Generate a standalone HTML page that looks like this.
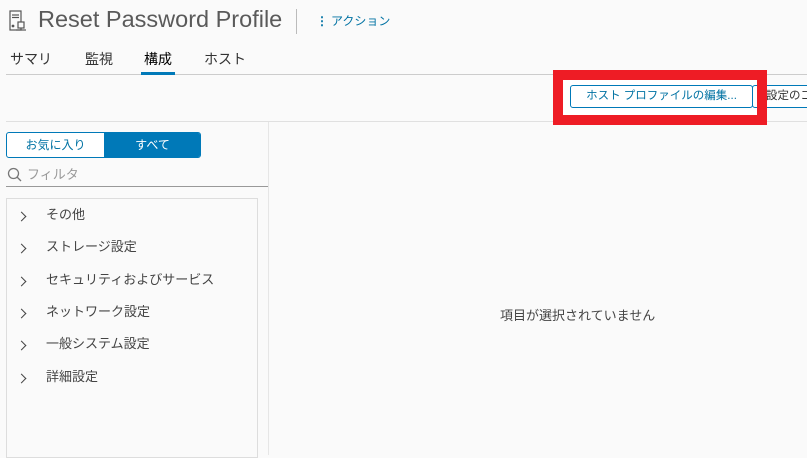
<!DOCTYPE html>
<html><head><meta charset="utf-8"><style>
*{margin:0;padding:0;box-sizing:border-box}
body{width:807px;height:455px;overflow:hidden;background:#fafafa;font-family:"Liberation Sans","Noto Sans CJK JP",sans-serif;color:#333;position:relative}
.a{position:absolute;white-space:nowrap}
.title{left:38px;top:4px;font-size:23.5px;color:#5a5a5a;line-height:30px}
.tab{top:49px;font-size:14px;color:#333;line-height:20px}
.item{left:46px;font-size:13px;color:#444;line-height:18px}
.chev{left:18px;width:7px;height:7px;border-right:1.6px solid #444;border-top:1.6px solid #444;transform:rotate(45deg)}
</style></head><body>
<svg class="a" style="left:9px;top:10px" width="18" height="22" viewBox="0 0 18 22" fill="none" stroke="#555" stroke-width="1.2">
<rect x="1" y="1" width="11" height="19"/><line x1="3" y1="5" x2="10" y2="5"/><line x1="3" y1="7.5" x2="10" y2="7.5"/>
<circle cx="4" cy="16" r="0.8" fill="#555"/><rect x="9" y="12" width="6" height="6" fill="#fafafa"/><line x1="7" y1="20" x2="17" y2="20"/>
</svg>
<div class="a title">Reset Password Profile</div>
<div class="a" style="left:296px;top:9px;width:1px;height:25px;background:#bbb"></div>
<div class="a" style="left:316px;top:12px;font-size:12px;color:#0072a3;line-height:18px"><span style="font-weight:bold;margin-right:3px">⋮</span>アクション</div>
<div class="a tab" style="left:10px">サマリ</div>
<div class="a tab" style="left:85px">監視</div>
<div class="a tab" style="left:144px;color:#000">構成</div>
<div class="a tab" style="left:204px">ホスト</div>
<div class="a" style="left:6px;top:74px;width:801px;height:1px;background:#ccc"></div>
<div class="a" style="left:141px;top:72px;width:34px;height:3px;background:#0079b8"></div>
<div class="a" style="left:6px;top:121px;width:801px;height:1px;background:#e0e0e0"></div>
<div class="a" style="left:268px;top:122px;width:1px;height:333px;background:#e6e6e6"></div>
<div class="a" style="left:553px;top:70px;width:214px;height:55px;background:#fff"></div>
<div class="a" style="left:570px;top:85px;width:183px;height:23px;border:1px solid #0079b8;border-radius:3px;background:#fff;font-size:11.5px;color:#0072a3;text-align:center;line-height:21px">ホスト プロファイルの編集...</div>
<div class="a" style="left:752px;top:85px;width:70px;height:23px;border:1px solid #0079b8;border-radius:3px;background:#fff;font-size:11.5px;color:#333;padding-left:13px;line-height:21px">設定のコ</div>
<div class="a" style="left:553px;top:70px;width:214px;height:55px;border:10px solid #ee1c25"></div>
<div class="a" style="left:6px;top:132px;width:195px;height:26px;border:1px solid #0079b8;border-radius:3px;background:#fff;overflow:hidden">
<div class="a" style="left:0;top:0;width:97px;height:24px;font-size:12px;color:#0072a3;text-align:center;line-height:24px">お気に入り</div>
<div class="a" style="left:97px;top:0;width:97px;height:24px;background:#0079b8;font-size:12px;color:#fff;text-align:center;line-height:24px">すべて</div>
</div>
<svg class="a" style="left:7px;top:167px" width="16" height="16" viewBox="0 0 16 16" fill="none" stroke="#777" stroke-width="1.3"><circle cx="6.5" cy="6.5" r="5"/><line x1="10" y1="10" x2="14" y2="14"/></svg>
<div class="a" style="left:27px;top:166px;font-size:13px;color:#999;line-height:18px">フィルタ</div>
<div class="a" style="left:6px;top:186px;width:262px;height:1px;background:#999"></div>
<div class="a" style="left:6px;top:198px;width:252px;height:260px;border:1px solid #ddd;background:#fafafa"></div>
<div class="a chev" style="top:213px"></div><div class="a item" style="top:206px">その他</div>
<div class="a chev" style="top:245px"></div><div class="a item" style="top:238px">ストレージ設定</div>
<div class="a chev" style="top:278px"></div><div class="a item" style="top:271px">セキュリティおよびサービス</div>
<div class="a chev" style="top:310px"></div><div class="a item" style="top:303px">ネットワーク設定</div>
<div class="a chev" style="top:342px"></div><div class="a item" style="top:335px">一般システム設定</div>
<div class="a chev" style="top:375px"></div><div class="a item" style="top:368px">詳細設定</div>
<div class="a" style="left:500px;top:307px;font-size:13px;color:#444;line-height:18px">項目が選択されていません</div>
</body></html>
